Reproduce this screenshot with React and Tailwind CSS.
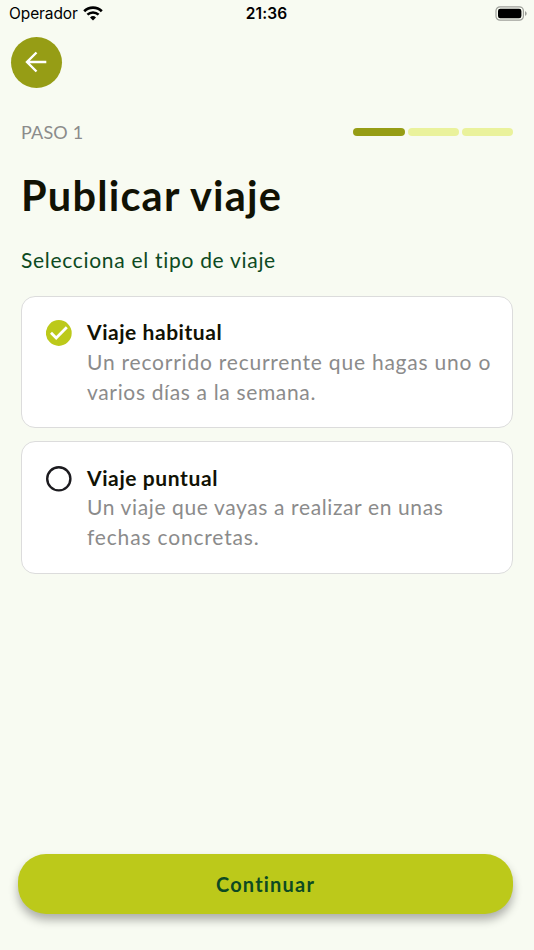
import React, { useState } from 'react';

const TRIP_TYPES = [
  {
    id: 'habitual',
    title: 'Viaje habitual',
    titleClass: 'tracking-[0.55px]',
    lines: [
      { text: 'Un recorrido recurrente que hagas uno o', className: 'tracking-[0.78px]' },
      { text: 'varios días a la semana.', className: 'tracking-[0.65px]' },
    ],
  },
  {
    id: 'puntual',
    title: 'Viaje puntual',
    titleClass: 'tracking-[0.6px]',
    lines: [
      { text: 'Un viaje que vayas a realizar en unas', className: 'tracking-[0.62px]' },
      { text: 'fechas concretas.', className: 'tracking-[0.82px]' },
    ],
  },
];

const StatusBar = () => (
  <div className="grid grid-cols-3 items-center h-7 pl-[9px] pr-[7px] text-black font-['Inter',sans-serif]">
    <div className="flex items-center gap-[6px]">
      <span className="text-[15.5px] leading-7 tracking-[-0.1px]">Operador</span>
      <svg className="w-[20px] h-[15px] -mt-[2px] -ml-px" viewBox="0 0 20 15" fill="none" stroke="currentColor">
        <path d="M1.2 5.2a12.6 12.6 0 0 1 17.6 0" strokeWidth="2.7" />
        <path d="M4.4 8.7a8 8 0 0 1 11.2 0" strokeWidth="2.5" />
        <path d="M10 14.6l3-3.2a4.4 4.4 0 0 0-6 0z" fill="currentColor" stroke="none" />
      </svg>
    </div>
    <span className="pr-[3px] text-center text-[15.5px] leading-7 font-semibold tracking-[0.1px]">21:36</span>
    <svg className="justify-self-end w-[32px] h-[15px] -mt-[2px]" viewBox="0 0 32 15">
      <rect x="1" y="0.8" width="27.4" height="13.4" rx="4" fill="none" stroke="#9ea09a" strokeWidth="1.2" />
      <rect x="3" y="2.8" width="23.4" height="9.4" rx="2.2" fill="#000" />
      <path d="M30 5.2c1 .4 1.7 1.2 1.7 2.3S31 9.4 30 9.8z" fill="#9ea09a" />
    </svg>
  </div>
);

const RadioMark = ({ checked }) =>
  checked ? (
    <svg className="w-[26px] h-[26px] shrink-0" viewBox="0 0 26 26">
      <circle cx="12.8" cy="13" r="12.9" fill="#bcc91a" />
      <path d="M5 12.7l5.2 5.2L20.8 7.3" fill="none" stroke="#fff" strokeWidth="2.8" />
    </svg>
  ) : (
    <svg className="w-[26px] h-[26px] shrink-0" viewBox="0 0 26 26">
      <circle cx="12.8" cy="12.8" r="11.6" fill="none" stroke="#1c1b1f" strokeWidth="2.4" />
    </svg>
  );

const TripCard = ({ trip, checked, onSelect }) => (
  <button
    onClick={onSelect}
    role="radio"
    aria-checked={checked}
    className="flex items-start gap-[15px] w-full h-[132.5px] pl-[24px] pt-[23.4px] bg-white border border-[#dcdcdc] rounded-[14px] text-left cursor-pointer"
  >
    <RadioMark checked={checked} />
    <span className="block -mt-[3px] text-[21px] leading-[29.7px] whitespace-nowrap">
      <span className={`block font-bold text-[#111204] ${trip.titleClass}`}>{trip.title}</span>
      {trip.lines.map((line) => (
        <span key={line.text} className={`block text-[#8b8b8b] ${line.className}`}>
          {line.text}
        </span>
      ))}
    </span>
  </button>
);

const App = () => {
  const [selected, setSelected] = useState('habitual');

  return (
    <div className="flex flex-col w-[534px] h-[950px] overflow-hidden bg-[#f8fbf2] font-['Lato',sans-serif]">
      <StatusBar />

      <button
        aria-label="Volver"
        className="flex items-center justify-center shrink-0 w-[51.5px] h-[51.5px] mt-[8.5px] ml-[10.5px] rounded-full bg-[#969d15] cursor-pointer"
      >
        <svg className="w-[22px] h-[22px]" viewBox="0 0 22 22" fill="none" stroke="#fff" strokeWidth="2.4">
          <path d="M21.3 11H2.2M11.5 1.5L2 11l9.5 9.5" />
        </svg>
      </button>

      <main className="flex flex-col flex-1 px-[21px] pt-[32px]">
        <div className="flex items-center justify-between h-6">
          <span className="text-[18px] leading-6 tracking-[0.15px] text-[#8b8b8b]">PASO 1</span>
          <div className="flex gap-[2.5px]">
            <div className="w-[52px] h-2 rounded-full bg-[#969d15]" />
            <div className="w-[51.5px] h-2 rounded-full bg-[#eaf29c]" />
            <div className="w-[51.5px] h-2 rounded-full bg-[#eaf29c]" />
          </div>
        </div>

        <h1 className="mt-[27px] text-[41.5px] leading-[48px] font-bold tracking-[1.2px] text-[#111204]">
          Publicar viaje
        </h1>
        <h2 className="mt-[27px] text-[21px] leading-[28px] tracking-[0.7px] text-[#0d4a22]">
          Selecciona el tipo de viaje
        </h2>

        <div role="radiogroup" className="flex flex-col gap-[13px] mt-[21.8px]">
          {TRIP_TYPES.map((trip) => (
            <TripCard
              key={trip.id}
              trip={trip}
              checked={selected === trip.id}
              onSelect={() => setSelected(trip.id)}
            />
          ))}
        </div>
      </main>

      <footer className="pl-[18px] pr-[21px] pb-[36.5px]">
        <button className="block w-full h-[59.5px] rounded-[28px] bg-[#bcc91a] text-[20px] font-bold tracking-[1.2px] text-[#0d4a22] shadow-[0_6px_10px_rgba(0,0,0,0.3)] cursor-pointer">
          Continuar
        </button>
      </footer>
    </div>
  );
};

export default App;
